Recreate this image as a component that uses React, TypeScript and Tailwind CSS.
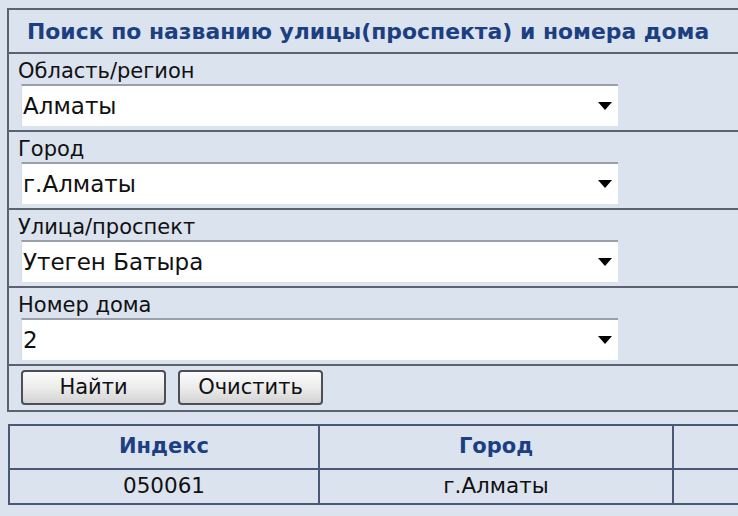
import React from "react";

const font = { fontFamily: '"DejaVu Sans", Tahoma, sans-serif' };

function Field({ label, value }: { label: string; value: string }) {
  return (
    <div className="flex flex-col h-[78px] border-b-2 border-[#5c6370]">
      <div className="h-[30px] pl-[9px] pt-[5px] text-[21px] leading-[24px] text-[#111]">{label}</div>
      <div className="ml-[12px] w-[597px] h-[42px] bg-white border-t-2 border-t-[#9aa0aa] border-l border-l-[#d6dbe3] flex items-center justify-between pl-[1px] pr-[6px]">
        <span className="text-[23px] text-[#111] leading-none">{value}</span>
        <svg width="14" height="8" viewBox="0 0 14 8"><path d="M0 0 H14 L7 8 Z" fill="#000" /></svg>
      </div>
    </div>
  );
}

function Btn({ children }: { children: React.ReactNode }) {
  return (
    <button className="w-[145px] h-[35px] rounded-[4px] border-2 border-[#4d4f55] bg-gradient-to-b from-[#fbfbfb] via-[#ececec] to-[#d3d3d3] text-[21px] text-[#111] flex items-center justify-center">
      {children}
    </button>
  );
}

export default function App() {
  return (
    <div className="w-[738px] h-[516px] overflow-hidden bg-[#dbe3ef]" style={font}>
      <div className="pt-[8px] pl-[7px]">
        <div className="w-[760px] border-t-2 border-l-2 border-b-2 border-[#5c6370] bg-[#dbe3ef]">
          <div className="h-[44px] border-b-2 border-[#5c6370] pl-[18px] pt-[2px] flex items-center text-[21.9px] font-bold text-[#1c3f82] whitespace-nowrap">
            Поиск по названию улицы(проспекта) и номера дома
          </div>
          <Field label="Область/регион" value="Алматы" />
          <Field label="Город" value="г.Алматы" />
          <Field label="Улица/проспект" value="Утеген Батыра" />
          <Field label="Номер дома" value="2" />
          <div className="h-[44px] flex items-start pt-[4px] pl-[12px] gap-[12px]">
            <Btn>Найти</Btn>
            <Btn>Очистить</Btn>
          </div>
        </div>
        <div className="mt-[12px] ml-[1px] w-[760px] border-2 border-[#4a5878] bg-[#dbe3ef]">
          <div className="grid grid-cols-[310px_354px_1fr] h-[44px] border-b-2 border-[#4a5878]">
            <div className="flex items-center justify-center text-[21px] font-bold text-[#1c3f82] border-r-2 border-[#4a5878]">Индекс</div>
            <div className="flex items-center justify-center text-[21px] font-bold text-[#1c3f82] border-r-2 border-[#4a5878]">Город</div>
            <div></div>
          </div>
          <div className="grid grid-cols-[310px_354px_1fr] h-[33px]">
            <div className="flex items-center justify-center text-[21.5px] text-[#111] border-r-2 border-[#4a5878]">050061</div>
            <div className="flex items-center justify-center text-[21.5px] text-[#111] border-r-2 border-[#4a5878]">г.Алматы</div>
            <div></div>
          </div>
        </div>
      </div>
    </div>
  );
}
